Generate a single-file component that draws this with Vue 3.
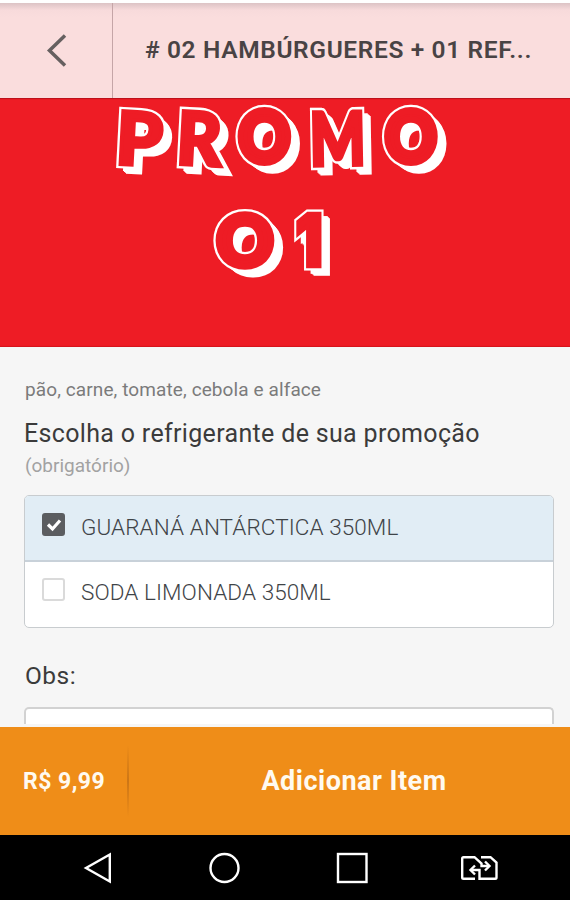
<script setup>
import { ref } from 'vue'

const letters = [
  { ch: 'P', x: 138, y: 165, sx: 1.01, rot: 3, kind: 'slab' },
  { ch: 'R', x: 198, y: 165, sx: 0.94, rot: 3, kind: 'slab' },
  { ch: 'O', x: 264.5, y: 162, sx: 0.9, rot: 0, kind: 'round' },
  { ch: 'M', x: 338, y: 165, sx: 0.8, rot: -1, kind: 'slab' },
  { ch: 'O', x: 411, y: 162, sx: 0.9, rot: 0, kind: 'round' },
  { ch: 'O', x: 245, y: 265.5, sx: 0.99, rot: 0, kind: 'round' },
  { ch: '1', x: 309, y: 266, sx: 0.84, rot: 0, kind: 'digit' },
]
const depth = [8, 7, 6, 5]
const options = ref([
  { name: 'GUARANÁ ANTÁRCTICA 350ML', checked: true },
  { name: 'SODA LIMONADA 350ML', checked: false },
])
const note = ref('')
</script>

<template>
  <div class="screen">
    <header class="header">
      <button class="back" aria-label="Voltar">
        <svg width="24" height="36" viewBox="0 0 24 36"><path d="M21 2.500 5.500 17.500 21 32.500" /></svg>
      </button>
      <h1 class="title"># 02 HAMBÚRGUERES + 01 REF...</h1>
    </header>

    <div class="banner">
      <svg width="570" height="249" viewBox="0 98 570 249">
        <defs>
          <g id="promo">
            <text
              v-for="(l, i) in letters"
              :key="i"
              :class="['glyph', l.kind]"
              :transform="`translate(${l.x} ${l.y}) rotate(${l.rot}) scale(${l.sx} 1)`"
            >{{ l.ch }}</text>
          </g>
        </defs>
        <use v-for="d in depth" :key="d" href="#promo" class="shade" :x="d" :y="d * 0.9" />
        <use href="#promo" class="edge" />
        <use href="#promo" class="face" />
      </svg>
    </div>

    <main class="content">
      <p class="desc">pão, carne, tomate, cebola e alface</p>
      <h2 class="question">Escolha o refrigerante de sua promoção</h2>
      <p class="required">(obrigatório)</p>
      <ul class="options">
        <li v-for="o in options" :key="o.name" :class="['option', { selected: o.checked }]" @click="o.checked = !o.checked">
          <span class="box">
            <svg v-if="o.checked" width="16" height="14" viewBox="0 0 16 14"><path d="M2 6.500 6.500 11 14 2.500" /></svg>
          </span>
          <span class="name">{{ o.name }}</span>
        </li>
      </ul>
      <label class="obs" for="note">Obs:</label>
      <textarea id="note" v-model="note" class="note"></textarea>
    </main>

    <footer class="cart">
      <span class="price">R$ 9,99</span>
      <i class="rule"></i>
      <button class="add">Adicionar Item</button>
    </footer>

    <nav class="system">
      <svg width="570" height="65" viewBox="0 835 570 65">
        <path d="M109.800 854.500V881.500L86 868Z" />
        <circle cx="224.500" cy="868" r="14" />
        <rect x="338" y="854" width="28.500" height="28" />
        <g class="switch">
          <path d="M475 878.700H463.500Q462.200 878.700 462.200 877.400V858.500Q462.200 857.200 463.500 857.200H474.500L481.500 863.500V866H488" />
          <path d="M481 857.200H490.500L496.500 862.500V877.400Q496.500 878.700 495.200 878.700H479.500V870H471.500" />
          <path d="M485 861.500 489.500 866 485 870.500M475 865.500 470.500 870 475 874.500" />
        </g>
      </svg>
    </nav>
  </div>
</template>

<style>
body {
  margin: 0;
  background: #fff;
}
</style>

<style scoped>
.screen {
  width: 570px;
  height: 900px;
  overflow: hidden;
  display: flex;
  flex-direction: column;
  box-sizing: border-box;
  padding-top: 3px;
  background: #fff;
  font-family: Roboto, "Liberation Sans", sans-serif;
}
button {
  font: inherit;
  border: 0;
  padding: 0;
  background: none;
}
h1, h2, p, ul {
  margin: 0;
  padding: 0;
  font-weight: 400;
}
.header {
  flex: 0 0 95px;
  display: flex;
  background: linear-gradient(#dcc3c5, #f7dadb 7px, #fadddd 14px);
}
.back {
  box-sizing: border-box;
  width: 113px;
  display: flex;
  align-items: center;
  justify-content: center;
  border-right: 1px solid #c5a5a7;
}
.back svg path {
  fill: none;
  stroke: #666060;
  stroke-width: 3.5;
}
.title {
  flex: 1;
  padding: 0 0 0 32px;
  line-height: 94px;
  font-size: 24.500px;
  font-weight: 600;
  letter-spacing: 0.630px;
  color: #494344;
  white-space: nowrap;
}
.banner {
  flex: 0 0 249px;
  background: #ee1c25;
  box-shadow: inset 0 2px 1px -1px #b9101a, inset 0 -2px 1px -1px #d4141c;
}
.banner svg {
  display: block;
}
.glyph {
  font-family: Lato, Inter, sans-serif;
  font-size: 71px;
  font-weight: 900;
  text-anchor: middle;
  vector-effect: non-scaling-stroke;
}
.round {
  stroke-width: var(--round);
}
.slab {
  font-size: 73px;
  stroke-width: var(--slab);
}
.digit {
  font-family: Inter, Roboto, sans-serif;
  stroke-width: var(--slab);
}
.shade {
  --round: 8px;
  --slab: 5px;
  fill: #fff;
  stroke: #fff;
}
.edge {
  --round: 11px;
  --slab: 8.500px;
  fill: #fff;
  stroke: #fff;
}
.face {
  --round: 6.500px;
  --slab: 4px;
  fill: #ee1c25;
  stroke: #ee1c25;
}
.content {
  flex: 0 0 380px;
  box-sizing: border-box;
  overflow: hidden;
  padding: 30px 16px 0 24px;
  background: #f6f6f6;
  display: flex;
  flex-direction: column;
}
.desc {
  margin-left: 1px;
  font-size: 19px;
  line-height: 26px;
  letter-spacing: 0.100px;
  color: #7b7b7b;
}
.question {
  margin: 15px 0 0 0;
  font-size: 25px;
  line-height: 32px;
  letter-spacing: 0.330px;
  color: #3b3b3b;
}
.required {
  margin: 3px 0 0 1px;
  font-size: 19px;
  line-height: 26px;
  color: #a2a2a2;
}
.options {
  flex: 0 0 133px;
  margin-top: 16px;
  box-sizing: border-box;
  border: 1.500px solid #c8cccf;
  border-radius: 5px;
  overflow: hidden;
  list-style: none;
  background: #fff;
}
.option {
  box-sizing: border-box;
  height: 66px;
  padding: 18px 0 0 17px;
  display: flex;
  align-items: flex-start;
  gap: 16px;
}
.option.selected {
  background: #e1edf5;
  border-bottom: 2px solid #c8d1d9;
}
.box {
  box-sizing: border-box;
  width: 23px;
  height: 23px;
  margin-top: -2px;
  border: 2px solid #dadada;
  border-radius: 3px;
  display: flex;
  align-items: center;
  justify-content: center;
  background: #fff;
}
.selected .box {
  margin-top: -1px;
  background: #5b5d60;
  border-color: #5b5d60;
}
.box path {
  fill: none;
  stroke: #fff;
  stroke-width: 3.200;
}
.name {
  font-size: 22.500px;
  font-weight: 360;
  line-height: 26px;
  letter-spacing: 0.080px;
  color: #3f4448;
}
.option:not(.selected) .name {
  position: relative;
  top: -1px;
}
.obs {
  margin: 32px 0 0 1px;
  font-size: 24.500px;
  line-height: 32px;
  letter-spacing: 0.500px;
  color: #3b3b3b;
}
.note {
  box-sizing: border-box;
  flex: 0 0 17px;
  margin-top: 15px;
  padding: 0;
  border: 2px solid #d2d2d2;
  border-bottom: 0;
  border-radius: 5px 5px 0 0;
  background: #fff;
  overflow: hidden;
  resize: none;
}
.cart {
  flex: 0 0 108px;
  display: flex;
  align-items: center;
  background: #ef8d18;
  color: #fffaf0;
  font-weight: 700;
}
.price {
  box-sizing: border-box;
  width: 127px;
  padding-left: 23px;
  font-size: 23px;
  letter-spacing: 0.450px;
}
.rule {
  width: 2px;
  height: 72px;
  background: linear-gradient(#d97b1500, #cc7616 50%, #d97b1500);
}
.add {
  flex: 1;
  padding-left: 9px;
  padding-right: 0;
  height: 100%;
  font-size: 27px;
  letter-spacing: 0.500px;
  color: inherit;
}
.system {
  flex: 0 0 65px;
  background: #000;
}
.system svg {
  display: block;
  fill: none;
  stroke: #fff;
  stroke-width: 2.400;
}
</style>
